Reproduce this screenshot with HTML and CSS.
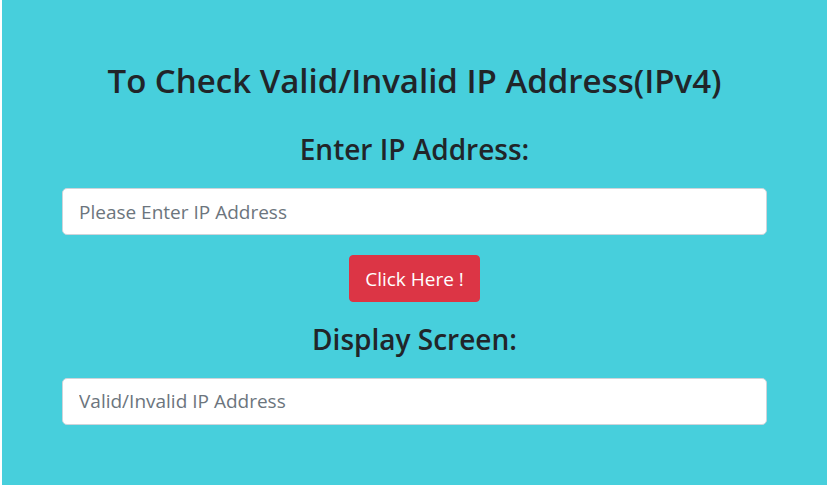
FILE: index.html
```html
<!DOCTYPE html>
<html>
<head>
<meta charset="utf-8">
<link rel="stylesheet" href="styles.css">
</head>
<body>
<div class="page">
  <div class="container">
    <h1 class="title">To Check Valid/Invalid IP Address(IPv4)</h1>
    <h2 class="label">Enter IP Address:</h2>
    <input class="field" type="text" placeholder="Please Enter IP Address">
    <div class="actions"><button class="btn" type="button">Click Here !</button></div>
    <h2 class="label label-display">Display Screen:</h2>
    <input class="field" type="text" placeholder="Valid/Invalid IP Address">
  </div>
</div>
</body>
</html>
```
FILE: styles.css
```css
html, body {
  margin: 0;
  padding: 0;
  background: #ffffff;
  height: 100%;
}
body {
  font-family: "Open Sans", "Noto Sans", sans-serif;
  color: #212529;
}
.page {
  margin-left: 2px;
  background: #47cfdc;
  min-height: 485px;
  overflow: hidden;
}
.container {
  width: 705px;
  margin: 0 auto;
  padding-top: 61px;
}
.title {
  font-size: 33px;
  font-weight: 600;
  text-align: center;
  margin: 0 0 32px;
  line-height: 1.2;
}
.label {
  font-size: 28px;
  font-weight: 600;
  text-align: center;
  margin: 0 0 22px;
  line-height: 1.2;
}
.label-display {
  margin-bottom: 21px;
}
.field {
  display: block;
  box-sizing: border-box;
  width: 100%;
  height: 47px;
  padding: 0 16px;
  font-family: inherit;
  font-size: 19px;
  color: #495057;
  background: #ffffff;
  border: 1px solid #ced4da;
  border-radius: 5px;
  outline: none;
}
.field::placeholder {
  color: #6c757d;
}
.actions {
  display: flex;
  justify-content: center;
  margin: 20px 0 21px;
}
.btn {
  height: 47px;
  padding: 0 15px;
  font-family: inherit;
  font-size: 19px;
  color: #ffffff;
  background: #dc3545;
  border: 1px solid #dc3545;
  border-radius: 4px;
}
```
